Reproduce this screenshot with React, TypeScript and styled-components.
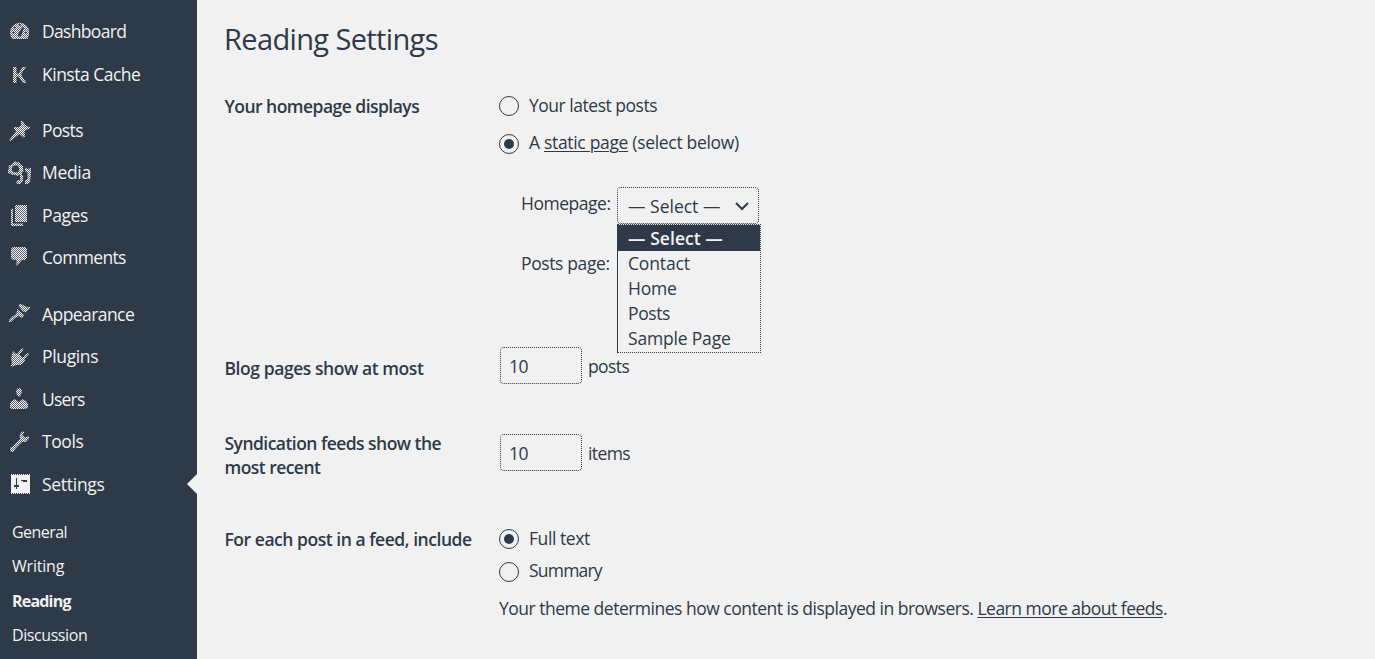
import React from "react";
import styled, { createGlobalStyle } from "styled-components";

const ink = "#2e3a47";
const paper = "#f1f1f1";

const GlobalStyle = createGlobalStyle`
  * { box-sizing: border-box; }
  body {
    margin: 0;
    background: ${paper};
    color: ${ink};
    font-family: "Open Sans", "Noto Sans", sans-serif;
    font-size: 17.5px;
    line-height: 24px;
  }
`;

const Page = styled.div`
  display: flex;
  width: 1375px;
  height: 659px;
  overflow: hidden;
`;

const Sidebar = styled.nav`
  flex: none;
  width: 197px;
  padding-top: 10px;
  background: ${ink};
  color: ${paper};
`;

const Group = styled.div`
  margin-bottom: 14px;
`;

const MenuItem = styled.a<{ $tall?: boolean; $track: number }>`
  position: relative;
  display: flex;
  gap: 10px;
  height: ${(p) => (p.$tall ? 43 : 42)}px;
  padding: 9px 0 0 8px;
  letter-spacing: ${(p) => p.$track}px;
  white-space: nowrap;
`;

const Arrow = styled.span`
  position: absolute;
  right: 0;
  top: 11px;
  border: 10px solid transparent;
  border-left: 0;
  border-right-color: ${paper};
`;

const Submenu = styled.div`
  margin-top: -4px;
  padding-left: 12px;
`;

const SubItem = styled.a<{ $current?: boolean; $track: number }>`
  display: block;
  height: 34.4px;
  font-size: 16px;
  line-height: 34px;
  font-weight: ${(p) => (p.$current ? 700 : 400)};
  letter-spacing: ${(p) => p.$track}px;
`;

const Glyph = styled.svg`
  flex: none;
  width: 24px;
  height: 24px;
`;

const Defs = styled.svg`
  display: block;
  width: 0;
  height: 0;
`;

const Main = styled.main`
  flex: 1;
  padding: 19px 0 0 28px;
`;

const Title = styled.h1`
  margin: 0 0 0 -1px;
  height: 74px;
  font-size: 29px;
  line-height: 40px;
  font-weight: 400;
  letter-spacing: -0.63px;
`;

const Setting = styled.section<{ $height: number }>`
  display: grid;
  grid-template-columns: 274px 1fr;
  height: ${(p) => p.$height}px;
`;

const Heading = styled.h2<{ $top: number; $track: number }>`
  margin: ${(p) => p.$top}px 0 0 -0.5px;
  font-size: 17.5px;
  line-height: 24px;
  font-weight: 600;
  letter-spacing: ${(p) => p.$track}px;
  white-space: nowrap;
`;

const Choice = styled.label<{ $gap: number; $track: number }>`
  display: flex;
  gap: 10px;
  height: 24px;
  margin-bottom: ${(p) => p.$gap}px;
  letter-spacing: ${(p) => p.$track}px;
  white-space: nowrap;
`;

const Radio = styled.span<{ $drop?: number }>`
  display: grid;
  place-items: center;
  flex: none;
  width: 20px;
  height: 20px;
  margin-top: ${(p) => p.$drop ?? 3}px;
  border: 1px solid ${ink};
  border-radius: 50%;
`;

const Dot = styled.span`
  width: 10px;
  height: 10px;
  border-radius: 50%;
  background: ${ink};
`;

const Link = styled.a`
  text-decoration: underline;
  text-decoration-thickness: 1px;
  text-underline-offset: 2px;
`;

const PageRow = styled.div<{ $top: number }>`
  display: flex;
  height: 37px;
  margin: ${(p) => p.$top}px 0 0 22px;
`;

const PageLabel = styled.span<{ $track: number }>`
  width: 96px;
  padding-top: 4px;
  letter-spacing: ${(p) => p.$track}px;
  white-space: nowrap;
`;

const SelectBox = styled.div`
  position: relative;
  display: flex;
  align-items: center;
  justify-content: space-between;
  width: 142px;
  height: 37px;
  padding: 0 8px 0 10px;
  border: 1px dotted ${ink};
  border-radius: 4px;
`;

const Options = styled.div`
  position: absolute;
  left: -1px;
  top: 36px;
  width: 144px;
  height: 129px;
  border: 1px dotted ${ink};
  border-left-style: solid;
  background: ${paper};
`;

const Option = styled.div<{ $selected?: boolean; $track: number }>`
  height: ${(p) => (p.$selected ? 26 : 25)}px;
  padding-left: 10px;
  line-height: ${(p) => (p.$selected ? 26 : 24)}px;
  letter-spacing: ${(p) => p.$track}px;
  white-space: nowrap;
  color: ${(p) => (p.$selected ? paper : ink)};
  background: ${(p) => (p.$selected ? ink : "transparent")};
  font-weight: ${(p) => (p.$selected ? 600 : 400)};
`;

const NumberRow = styled.div<{ $top?: number }>`
  display: flex;
  gap: 6px;
  margin: ${(p) => p.$top ?? 0}px 0 0 1px;
  line-height: 39px;
  letter-spacing: -0.6px;
`;

const NumberBox = styled.span`
  width: 82px;
  height: 37px;
  padding-left: 8px;
  border: 1px dotted ${ink};
  border-radius: 4px;
  line-height: 37px;
`;

const Note = styled.p`
  margin: 0;
  white-space: nowrap;
  letter-spacing: -0.5px;
`;

const tone = "url(#weave)";

const WeaveDefs = () => (
  <Defs aria-hidden="true">
    <defs>
      <pattern id="weave" width="2" height="2" patternUnits="userSpaceOnUse">
        <path d="M0 0h2v2H0z" fill={paper} fillOpacity="0.25" />
        <path d="M0 0h1v1H0zM1 1h1v1H1z" fill={paper} shapeRendering="crispEdges" />
      </pattern>
    </defs>
  </Defs>
);

const icons: Record<string, React.ReactNode> = {
  dashboard: (
    <>
      <path fill={tone} d="M4 20C1 15 1.500 9 6 6C10 3 14 3 17.500 6C22 9 22 15 19.500 20Z" />
      <path fill={ink} d="M11 5h1.500v2H11zM6.500 7.500l1.500 1.200-1 1-1.400-1.300zM4.500 13h2v1.200h-2zM17 13h2v1.200h-2zM14.500 8l1.500.8-3 8a1.700 1.700 0 0 1-3-1.500z" />
    </>
  ),
  kinsta: (
    <path fill={tone} d="M5 5h3.500v6.500h2L14.500 5h3.500l-5 7.500 5.500 8.500h-3.500l-4.500-6.500h-2V21H5z" />
  ),
  pin: (
    <path fill={tone} d="M13 3h2l1 2.500 3 3 3 .5-.5 1.500-3.500 1.500-1.500 2.500.5 4-1.500 1-4-3.500L3 22.500l-2 .8.800-2L8 13.500 5.500 10l1-1 4 .2 2.500-2z" />
  ),
  media: (
    <path fill={tone} fillRule="evenodd" d="M5 3l2-2 2 1.500L11.500 2l1 2.500L15 6v3l1 2-2 1.500V15h-3l-1.500 1-2-1H4l-1-1.500H0V10l1-2-.5-2.500L3 5zM6 5.500L4 7v3.500l2 1.800h3.500l1.500-2V7.500L9.500 5.500zM12 15h3v6l-2.500 3H9.500L8 22l2-2h2zM17 7.500l3 1.500 3-1.500v5L22 22l-2.500 2H17v-3.500l2.500-1.500v-6L17 11z" />
  ),
  pages: (
    <path fill={tone} d="M8 2h11v17H7V3zM3 6h2v14.500h10V23H3z" />
  ),
  comments: (
    <path fill={tone} d="M5 2h12l2 2v9l-2 2h-3l-5.500 6V15H5l-2-2V4z" />
  ),
  appearance: (
    <>
      <path fill={tone} d="M11 2.500l2-.5 7 3.500L22 4.500v2L17.500 10.500 15 9.500 10.500 4zM9 7l7 6-2 3-3-2-4 2-4 4H1v-2l4-4 2-1 2-3z" />
      <path stroke={ink} strokeWidth="1" fill="none" d="M9.500 5l7 6.500" />
    </>
  ),
  plugins: (
    <path fill={tone} d="M5 7l3 3 1.500-.5L14 4l1.500 1.500-4 5 3 3.500 5-5L21 10l-4.500 5 .5 2-4 4H8.500l-4 1.500-2.500-.5 2-3-1-5z" />
  ),
  users: (
    <path fill={tone} d="M9 2l2-1 2 1 1 2-1 4-2 2-2-2-1-4zM7 12l4 3 4-3 3 2 2 3v4l-3 1H4l-2-1v-4l2-3z" />
  ),
  tools: (
    <path fill={tone} d="M14 2.500L11.500 6l.5 4-7 7-3 2 .5 3.500L5 23l3-4 6-6h4l3-3.500V7l-4 1.500L14.500 6l2-3z" />
  ),
  settings: (
    <g shapeRendering="crispEdges">
      <path fill={paper} d="M3 3h19v18H3z" />
      <path stroke={paper} strokeDasharray="1 1" d="M3 2.500h19M3 21.500h19" />
      <path fill={ink} d="M8 6h1v7h2v2H9v2H8v-2H6v-2h2zM13 8h6v2h-4V9h-2z" />
    </g>
  ),
};

const Icon = ({ name }: { name: string }) => (
  <Glyph viewBox="0 0 24 24" aria-hidden="true">
    {icons[name]}
  </Glyph>
);

type Entry = { label: string; icon: string; tall?: boolean; track: number; current?: boolean };

const groups: Entry[][] = [
  [
    { label: "Dashboard", icon: "dashboard", tall: true, track: -0.68 },
    { label: "Kinsta Cache", icon: "kinsta", track: -0.5 },
  ],
  [
    { label: "Posts", icon: "pin", track: -0.6 },
    { label: "Media", icon: "media", tall: true, track: -0.3 },
    { label: "Pages", icon: "pages", track: -0.4 },
    { label: "Comments", icon: "comments", tall: true, track: -0.68 },
  ],
  [
    { label: "Appearance", icon: "appearance", track: -0.57 },
    { label: "Plugins", icon: "plugins", tall: true, track: -0.35 },
    { label: "Users", icon: "users", track: -0.8 },
    { label: "Tools", icon: "tools", tall: true, track: -0.4 },
    { label: "Settings", icon: "settings", track: -0.28, current: true },
  ],
];

const subItems = [
  { label: "General", track: -0.55 },
  { label: "Writing", track: -0.2 },
  { label: "Reading", track: -0.8, current: true },
  { label: "Discussion", track: -0.42 },
];

const options = [
  { label: "— Select —", track: 0.05, selected: true },
  { label: "Contact", track: -0.15 },
  { label: "Home", track: -0.25 },
  { label: "Posts", track: -0.4 },
  { label: "Sample Page", track: -0.18 },
];

export default function App() {
  return (
    <Page>
      <GlobalStyle />
      <Sidebar>
        <WeaveDefs />
        {groups.map((group, i) => (
          <Group key={i}>
            {group.map((item) => (
              <MenuItem key={item.label} $tall={item.tall} $track={item.track}>
                <Icon name={item.icon} />
                <span>{item.label}</span>
                {item.current && <Arrow />}
              </MenuItem>
            ))}
          </Group>
        ))}
        <Submenu>
          {subItems.map((item) => (
            <SubItem key={item.label} $current={item.current} $track={item.track}>
              {item.label}
            </SubItem>
          ))}
        </Submenu>
      </Sidebar>
      <Main>
        <Title>Reading Settings</Title>
        <Setting $height={254}>
          <Heading $top={1} $track={-0.53}>Your homepage displays</Heading>
          <div>
            <Choice $gap={13} $track={-0.48}>
              <Radio />
              <span>Your latest posts</span>
            </Choice>
            <Choice $gap={0} $track={-0.32}>
              <Radio $drop={4}><Dot /></Radio>
              <span>A <Link>static page</Link> (select below)</span>
            </Choice>
            <PageRow $top={33}>
              <PageLabel $track={-0.48}>Homepage:</PageLabel>
              <SelectBox>
                <span>— Select —</span>
                <svg width="16" height="12" viewBox="0 0 16 12" fill="none" stroke={ink} strokeWidth="2">
                  <path d="M2 3l6 6 6-6" />
                </svg>
                <Options>
                  {options.map((option) => (
                    <Option key={option.label} $selected={option.selected} $track={option.track}>
                      {option.label}
                    </Option>
                  ))}
                </Options>
              </SelectBox>
            </PageRow>
            <PageRow $top={23}>
              <PageLabel $track={-0.38}>Posts page:</PageLabel>
            </PageRow>
          </div>
        </Setting>
        <Setting $height={84}>
          <Heading $top={9} $track={-0.43}>Blog pages show at most</Heading>
          <NumberRow>
            <NumberBox>10</NumberBox>
            <span>posts</span>
          </NumberRow>
        </Setting>
        <Setting $height={95}>
          <Heading $top={0} $track={-0.54}>
            Syndication feeds show the
            <br />
            most recent
          </Heading>
          <NumberRow $top={3}>
            <NumberBox>10</NumberBox>
            <span>items</span>
          </NumberRow>
        </Setting>
        <Setting $height={120}>
          <Heading $top={1} $track={-0.46}>For each post in a feed, include</Heading>
          <div>
            <Choice $gap={8} $track={-0.43}>
              <Radio><Dot /></Radio>
              <span>Full text</span>
            </Choice>
            <Choice $gap={14} $track={-0.8}>
              <Radio $drop={4} />
              <span>Summary</span>
            </Choice>
            <Note>
              Your theme determines how content is displayed in browsers. <Link>Learn more about feeds</Link>.
            </Note>
          </div>
        </Setting>
      </Main>
    </Page>
  );
}
